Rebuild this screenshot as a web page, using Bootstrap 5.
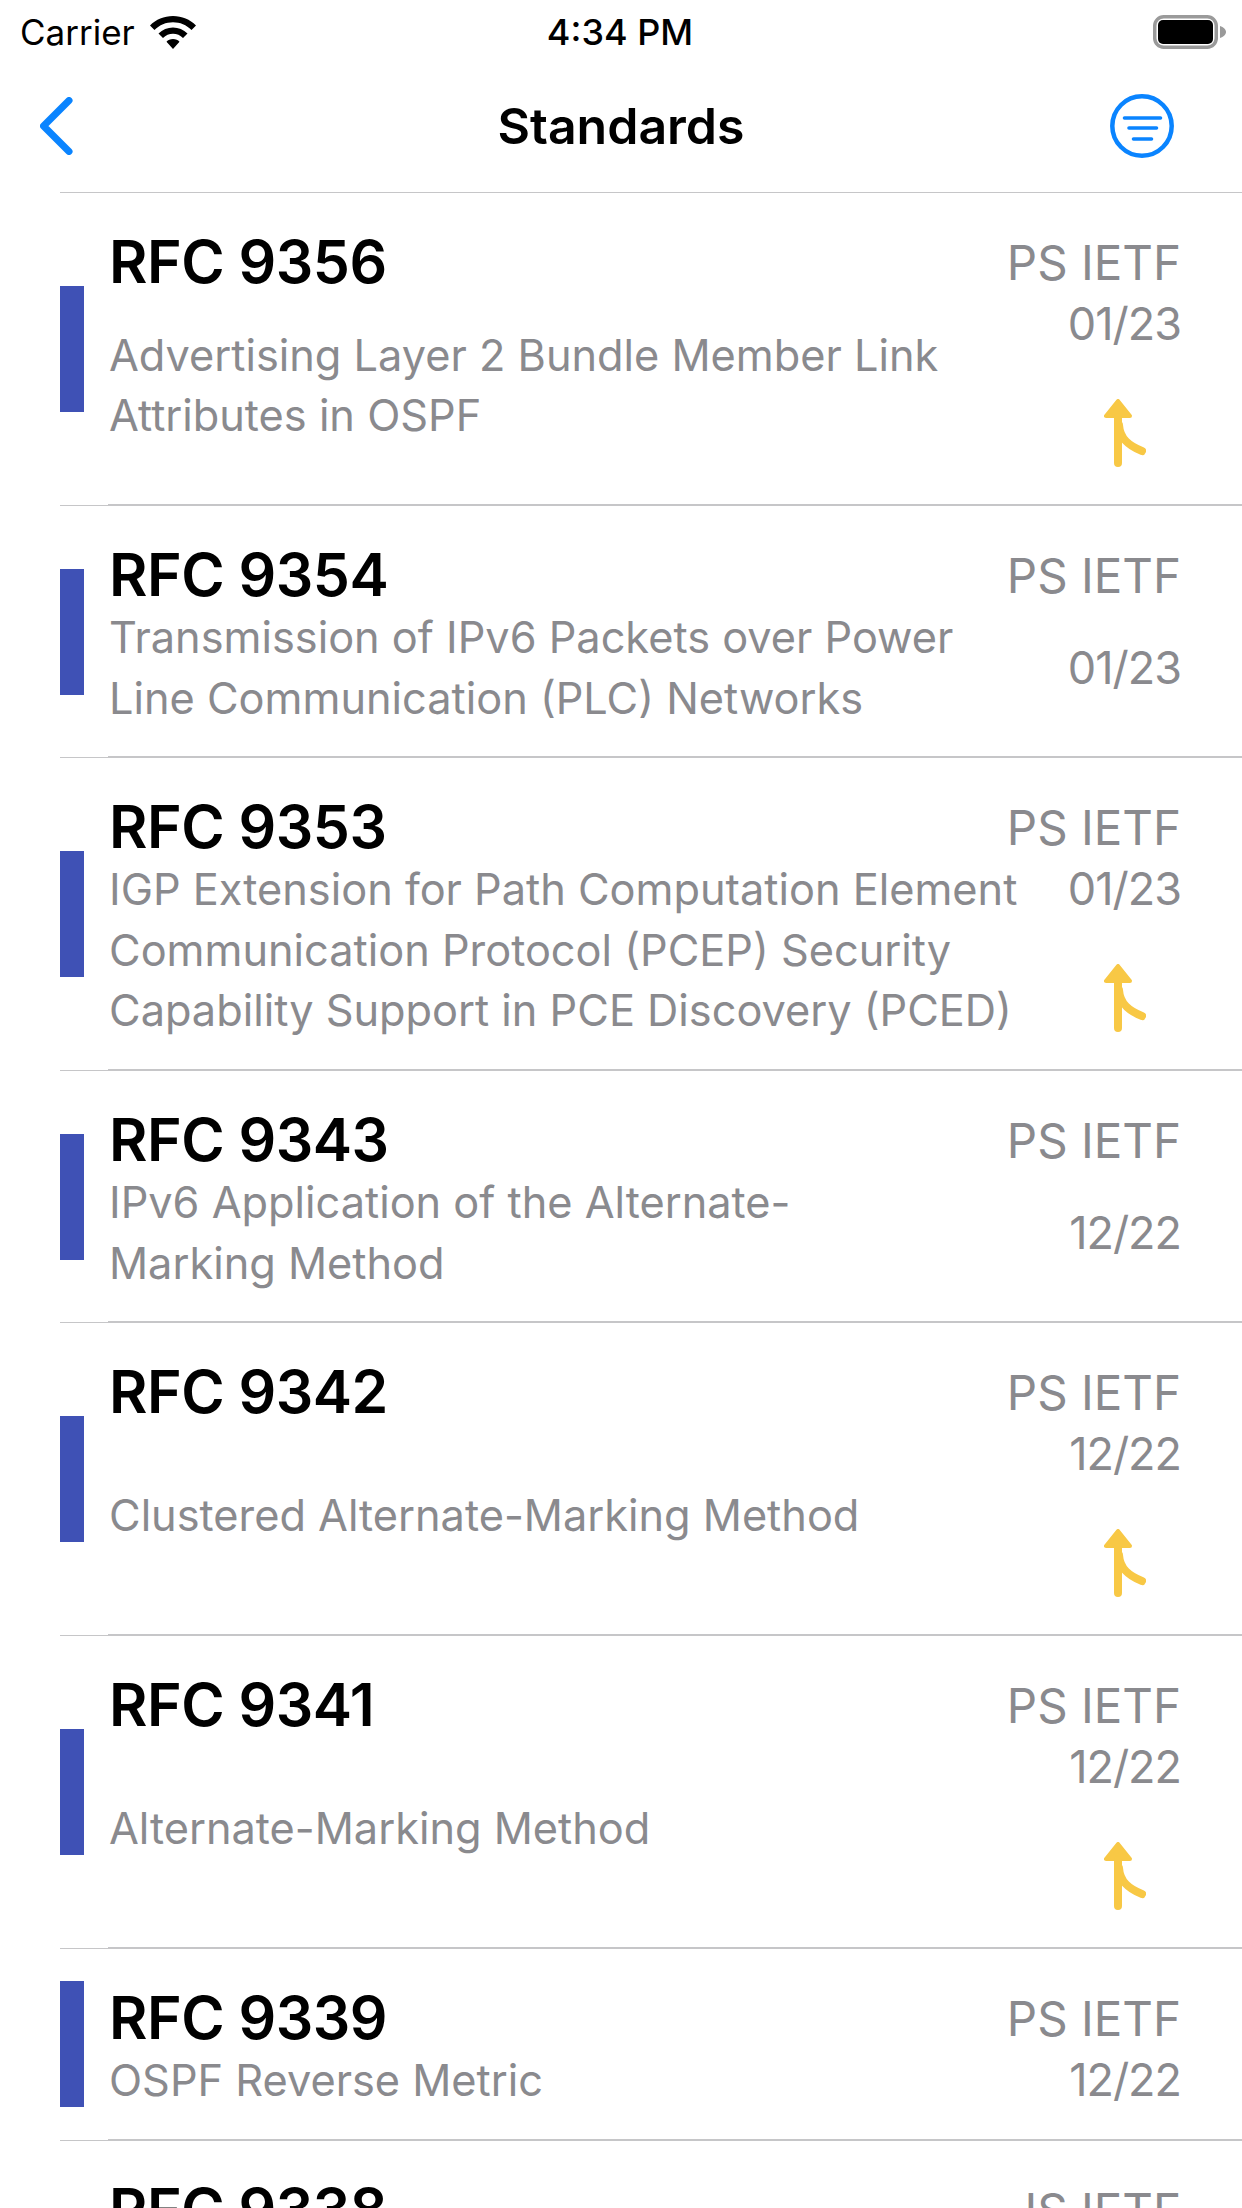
<!DOCTYPE html>
<html lang="en">
<head>
  <meta charset="UTF-8">
  <title>Standards</title>
  <link href="https://cdn.jsdelivr.net/npm/bootstrap@5.3.2/dist/css/bootstrap.min.css" rel="stylesheet">
  <style>
    html, body { height: 2208px; overflow: hidden; background: #fff; }
    body { font-family: Inter, "Liberation Sans", sans-serif; color: #000; }
    .status-bar { height: 64px; padding: 0 15px 0 20px; font-size: 35px; }
    .status-left { width: 400px; gap: 15px; }
    .status-time { font-size: 36px; font-weight: 500; }
    .status-right { width: 407px; }
    .nav-head { height: 128px; padding: 0 40px 4px 40px; }
    .nav-side { width: 240px; }
    .nav-title { font-size: 50px; font-weight: 600; }
    .filter-btn { margin-right: 28px; }
    .rfc-list { margin-left: 60px; border-top: 1px solid #c6c6c8; }
    .rfc-row { border-bottom: 1px solid #c6c6c8; }
    .rfc-bar { flex: 0 0 24px; height: 126px; background: #3f51b5; }
    .rfc-body { margin-left: 24px; padding: 25px 61px 28px 1px; border-bottom: 1px solid #c6c6c8; }
    .rfc-head { height: 76px; }
    .rfc-title { font-size: 59px; font-weight: 600; line-height: 88px; letter-spacing: -.5px; }
    .rfc-org { font-size: 47.500px; line-height: 90px; color: #8a8a8e; }
    .rfc-date { font-size: 45px; line-height: 60px; letter-spacing: -1px; color: #8a8a8e; }
    .rfc-sub { width: 930px; font-size: 43.300px; line-height: 60.500px; color: #8a8a8e; }
    .rfc-meta { width: 140px; }
    .rfc-arrow { margin: 45px 35px 7px 0; }
  </style>
</head>
<body>
  <div class="status-bar d-flex align-items-center justify-content-between">
    <div class="status-left d-flex align-items-center">
      <span>Carrier</span>
      <svg width="46" height="33" viewBox="0 0 46 33"><path d="M23 0C14 0 6 3.500 0 9.500l4.500 4.500C9.500 9 16 6.300 23 6.300S36.500 9 41.500 14L46 9.500C40 3.500 32 0 23 0zM23 11.500c-5.500 0-10.500 2.200-14.500 6l4.500 4.500c2.700-2.700 6.200-4.200 10-4.200s7.300 1.500 10 4.200l4.500-4.500c-4-3.800-9-6-14.500-6zM23 23c-2.700 0-5 1-6.500 2.700L23 33l6.500-7.300C28 24 25.700 23 23 23z" fill="#000"/></svg>
    </div>
    <span class="status-time">4:34 PM</span>
    <div class="status-right d-flex justify-content-end">
      <svg width="74" height="34" viewBox="0 0 74 34"><rect x="1.750" y="1.750" width="61.500" height="30.500" rx="9" fill="none" stroke="#9a9a9a" stroke-width="3.500"/><rect x="5" y="5" width="55" height="24" rx="5" fill="#000"/><path d="M67 11c3.500 1 6 3.500 6 6s-2.500 5-6 6z" fill="#9a9a9a"/></svg>
    </div>
  </div>

  <div class="nav-head d-flex align-items-center justify-content-between">
    <div class="nav-side">
      <svg class="d-block" width="34" height="58" viewBox="0 0 34 58"><path d="M29 3.500L3.500 29 29 54.500" fill="none" stroke="#0a84ff" stroke-width="7" stroke-linecap="round" stroke-linejoin="round"/></svg>
    </div>
    <div class="nav-title">Standards</div>
    <div class="nav-side d-flex justify-content-end">
      <svg class="filter-btn" width="64" height="64" viewBox="0 0 64 64"><circle cx="32" cy="32" r="29.700" fill="none" stroke="#0a84ff" stroke-width="4.500"/><path d="M14.500 24h36M19 34h27.500M23.500 45h18" stroke="#0a84ff" stroke-width="3.600" stroke-linecap="round"/></svg>
    </div>
  </div>

  <div id="rfcList" class="rfc-list"></div>

  <script src="https://cdn.jsdelivr.net/npm/bootstrap@5.3.2/dist/js/bootstrap.bundle.min.js"></script>
  <script>
    const rfcs = [
      { id: 'RFC 9356', org: 'PS IETF', date: '01/23', arrow: true, sub: 'Advertising Layer 2 Bundle Member Link Attributes in OSPF' },
      { id: 'RFC 9354', org: 'PS IETF', date: '01/23', arrow: false, sub: 'Transmission of IPv6 Packets over Power Line Communication (PLC) Networks' },
      { id: 'RFC 9353', org: 'PS IETF', date: '01/23', arrow: true, sub: 'IGP Extension for Path Computation Element Communication Protocol (PCEP) Security Capability Support in PCE Discovery (PCED)' },
      { id: 'RFC 9343', org: 'PS IETF', date: '12/22', arrow: false, sub: 'IPv6 Application of the Alternate-<br>Marking Method' },
      { id: 'RFC 9342', org: 'PS IETF', date: '12/22', arrow: true, sub: 'Clustered Alternate-Marking Method' },
      { id: 'RFC 9341', org: 'PS IETF', date: '12/22', arrow: true, sub: 'Alternate-Marking Method' },
      { id: 'RFC 9339', org: 'PS IETF', date: '12/22', arrow: false, sub: 'OSPF Reverse Metric' },
      { id: 'RFC 9338', org: 'IS IETF', date: '12/22', arrow: true, sub: '' }
    ];

    const arrowSvg = `<svg class="rfc-arrow d-block" width="42" height="70" viewBox="0 0 42 70">
      <path d="M14 2L2 17h24z" fill="#f8c845" stroke="#f8c845" stroke-width="4" stroke-linejoin="round"/>
      <path d="M14 18v46M15 26c1 14 10 21 23 26" fill="none" stroke="#f8c845" stroke-width="8" stroke-linecap="round"/></svg>`;

    document.getElementById('rfcList').innerHTML = rfcs.map(r => `
      <div class="rfc-row d-flex align-items-center">
        <div class="rfc-bar"></div>
        <div class="rfc-body flex-grow-1">
          <div class="rfc-head d-flex justify-content-between">
            <div class="rfc-title">${r.id}</div>
            <div class="rfc-org">${r.org}</div>
          </div>
          <div class="d-flex justify-content-between">
            <div class="rfc-sub d-flex align-items-center"><div>${r.sub}</div></div>
            <div class="rfc-meta d-flex flex-column justify-content-center align-items-end">
              <div class="rfc-date">${r.date}</div>
              ${r.arrow ? arrowSvg : ''}
            </div>
          </div>
        </div>
      </div>`).join('');
  </script>
</body>
</html>
